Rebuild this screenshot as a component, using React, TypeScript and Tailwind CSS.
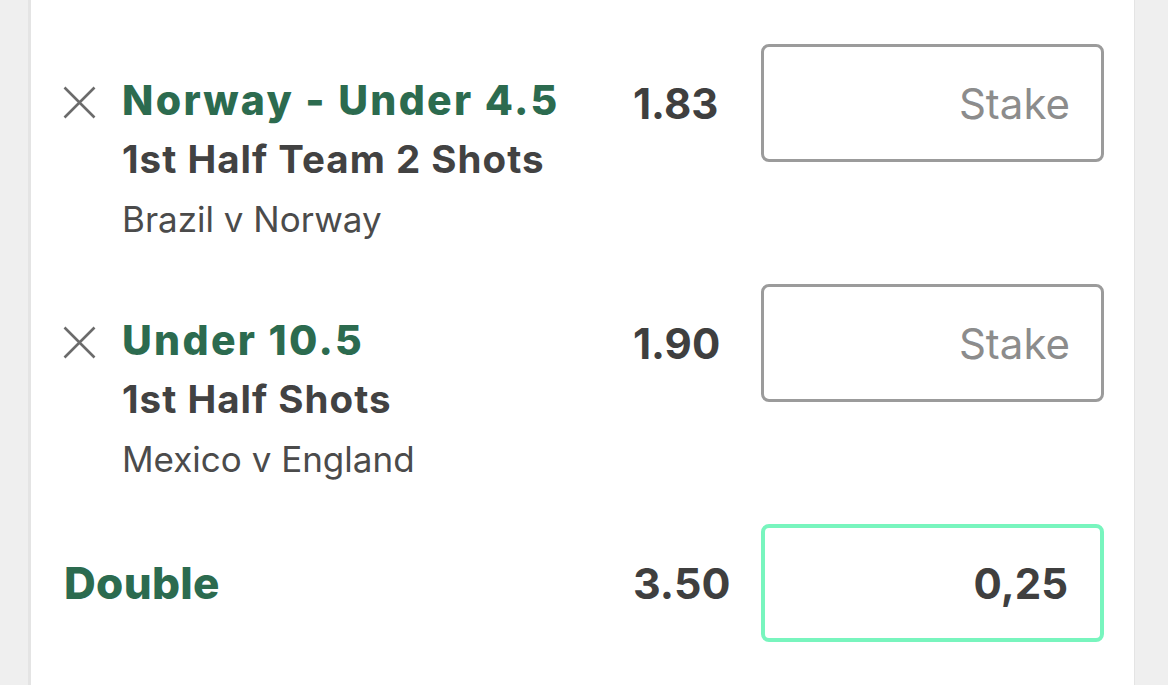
import React from "react"

type Selection = {
  id: string
  market: string
  title: string
  event: string
  odds: string
}

const selections: Selection[] = [
  {
    id: "s1",
    market: "Norway - Under 4.5",
    title: "1st Half Team 2 Shots",
    event: "Brazil v Norway",
    odds: "1.83",
  },
  {
    id: "s2",
    market: "Under 10.5",
    title: "1st Half Shots",
    event: "Mexico v England",
    odds: "1.90",
  },
]

function CloseIcon() {
  return (
    <svg width="33" height="33" viewBox="0 0 33 33" fill="none">
      <path
        d="M1.5 1.5 L31.5 31.5 M31.5 1.5 L1.5 31.5"
        stroke="#6b6b6b"
        strokeWidth="2.6"
        strokeLinecap="butt"
      />
    </svg>
  )
}

function SelectionRow({ sel }: { sel: Selection }) {
  return (
    <div className="flex items-start">
      <div className="w-[91px] shrink-0 pl-[32px] pt-[42px]">
        <CloseIcon />
      </div>
      <div className="w-[511px] shrink-0 pt-[27px]">
        <div className="text-[41px] leading-[58px] font-extrabold tracking-[2.3px] text-[#2c6b4f]">
          {sel.market}
        </div>
        <div className="text-[38.5px] leading-[60px] font-bold tracking-[1px] text-[#424242]">
          {sel.title}
        </div>
        <div className="text-[35px] leading-[60px] text-[#4b4b4b]">
          {sel.event}
        </div>
      </div>
      <div className="flex h-[118px] w-[128px] shrink-0 items-center text-[42px] font-bold text-[#3f3f3f]">
        {sel.odds}
      </div>
      <div className="flex h-[118px] w-[343px] shrink-0 items-center justify-end rounded-[8px] border-[3px] border-[#9b9b9b] pr-[31px] text-[42px] text-[#8c8c8c]">
        Stake
      </div>
    </div>
  )
}

export default function App() {
  return (
    <div
      className="flex h-[685px] w-full overflow-hidden bg-[#efefef]"
      style={{ fontFamily: "Inter, 'Liberation Sans', sans-serif" }}
    >
      <div className="ml-[28px] flex w-[1107px] flex-col gap-[35px] border-l-[3px] border-r border-[#e4e4e4] bg-white pt-[44px]">
        {selections.map((sel) => (
          <SelectionRow key={sel.id} sel={sel} />
        ))}
        <div className="flex h-[118px] items-center">
          <div className="w-[602px] shrink-0 pl-[33px] text-[44px] font-extrabold tracking-[0.3px] text-[#2c6b4f]">
            Double
          </div>
          <div className="w-[128px] shrink-0 text-[43px] font-bold text-[#3f3f3f]">
            3.50
          </div>
          <div className="flex h-[118px] w-[343px] shrink-0 items-center justify-end rounded-[8px] border-[4px] border-[#78f5be] pr-[32px] text-[42px] font-bold text-[#3f3f3f]">
            0,25
          </div>
        </div>
      </div>
    </div>
  )
}
